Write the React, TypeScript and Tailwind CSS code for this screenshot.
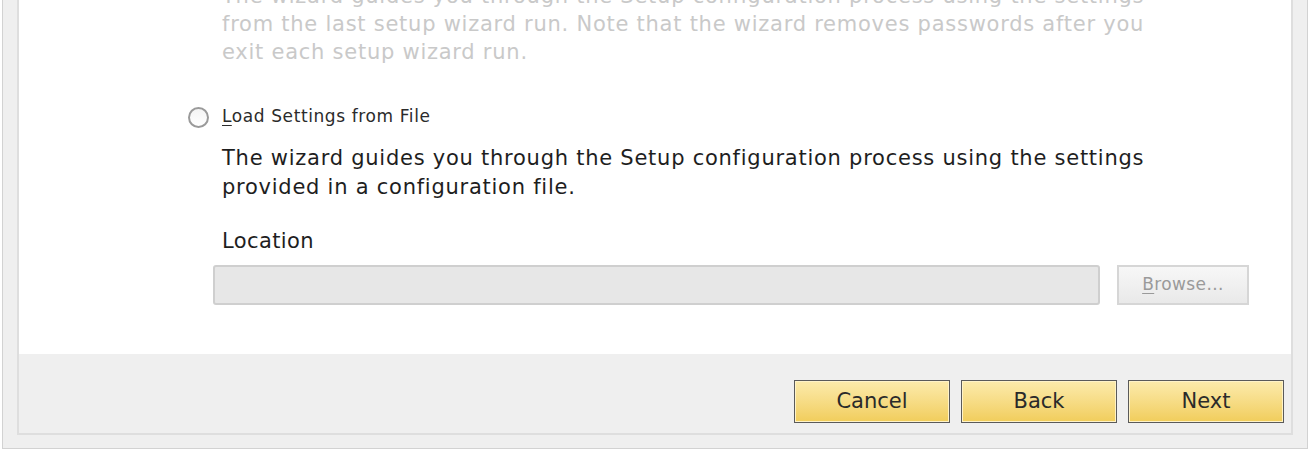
import React from "react";

const font = { fontFamily: '"DejaVu Sans", Verdana, sans-serif' };

function YellowButton({ label }: { label: string }) {
  return (
    <button
      className="w-[156px] h-[43px] border border-[#5a5a5a] bg-gradient-to-b from-[#fcebab] to-[#f1cd5a] text-[21px] text-[#2a2a2a] flex items-center justify-center shadow-[inset_0_0_0_1px_#fff3c8]"
      style={font}
    >
      {label}
    </button>
  );
}

export default function App() {
  return (
    <div className="w-[1311px] h-[451px] overflow-hidden bg-white pl-[2px] pr-[3px] pb-[2px]" style={font}>
      <div className="h-full bg-[#efefef] border-l border-r border-b border-[#d2d2d2] px-[14px] pb-[13px]">
        <div className="h-full border-l-2 border-r-2 border-b-2 border-[#dedede] flex flex-col">
          <div className="flex-1 bg-white pl-[203px] overflow-hidden">
            <div className="-mt-[18px] text-[21px] tracking-[0.75px] leading-[28px] text-[#c9c9c9] whitespace-nowrap">
              <div>The wizard guides you through the Setup configuration process using the settings</div>
              <div>from the last setup wizard run. Note that the wizard removes passwords after you</div>
              <div>exit each setup wizard run.</div>
            </div>
            <div className="mt-[39px] -ml-[34px] flex items-center h-[24px]">
              <span className="w-[21px] h-[21px] rounded-full border-2 border-[#9a9a9a] bg-gradient-to-b from-[#f4f4f4] to-white shrink-0" />
              <span className="ml-[13px] text-[17px] tracking-[0.6px] text-[#2b2b2b] whitespace-nowrap">
                <span className="underline underline-offset-[3px]">L</span>oad Settings from File
              </span>
            </div>
            <div className="mt-[15px] text-[21px] tracking-[0.75px] leading-[29px] text-[#1e1e1e] whitespace-nowrap">
              <div>The wizard guides you through the Setup configuration process using the settings</div>
              <div>provided in a configuration file.</div>
            </div>
            <div className="mt-[25px] text-[21px] tracking-[0.4px] leading-[28px] text-[#1e1e1e]">Location</div>
            <div className="mt-[10px] -ml-[9px] flex items-center">
              <div className="w-[887px] h-[40px] bg-[#e7e7e7] border-2 border-[#cfcfcf] rounded-[3px]" />
              <button className="ml-[17px] w-[132px] h-[40px] border-2 border-[#d6d6d6] bg-gradient-to-b from-[#f7f7f7] to-[#e9e9e9] text-[17px] tracking-[0.4px] text-[#9a9a9a] flex items-center justify-center">
                <span className="underline underline-offset-[3px]">B</span>rowse...
              </button>
            </div>
          </div>
          <div className="h-[79px] bg-[#efefef] flex items-start justify-end pt-[26px] pr-[7px] gap-[11px]">
            <YellowButton label="Cancel" />
            <YellowButton label="Back" />
            <YellowButton label="Next" />
          </div>
        </div>
      </div>
    </div>
  );
}
